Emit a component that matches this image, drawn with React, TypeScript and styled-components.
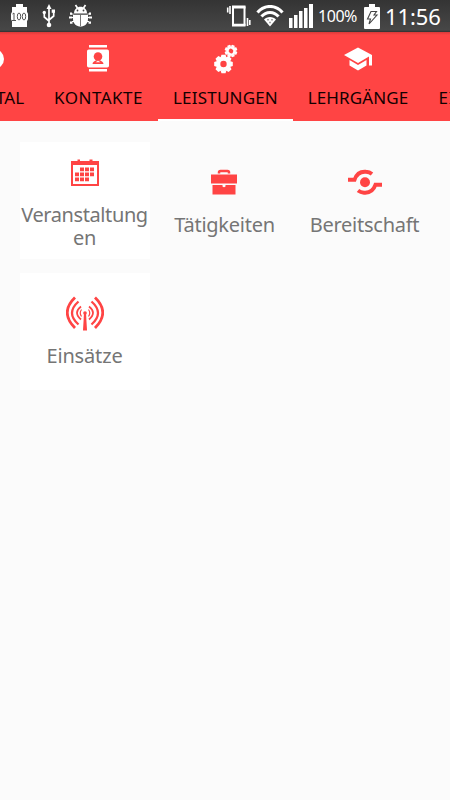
import React from "react";
import styled, { createGlobalStyle } from "styled-components";

const RED = "#ff4444";

const GlobalStyle = createGlobalStyle`
  * { box-sizing: border-box; }
  body { margin: 0; background: #fbfbfb; font-family: "Noto Sans", "Open Sans", sans-serif; }
  svg { display: block; flex: none; }
`;

const Screen = styled.div`
  width: 450px;
  height: 800px;
  overflow: hidden;
  background: #fbfbfb;
`;

const StatusBar = styled.header`
  display: flex;
  align-items: flex-start;
  justify-content: space-between;
  height: 32px;
  padding: 0 9px 0 11px;
  background: linear-gradient(#343434, #474747 94%, #303030);
  color: #fff;
`;

const StatusGroup = styled.div<{ $gap: number }>`
  display: flex;
  align-items: center;
  height: 32px;
  gap: ${(p) => p.$gap}px;
`;

const BatteryPercent = styled.span<{ $width: number }>`
  width: ${(p) => p.$width}px;
  font-size: 16px;
  line-height: 32px;
  letter-spacing: -0.45px;
  white-space: nowrap;
`;

const Clock = styled.time`
  width: 56px;
  font-size: 22px;
  line-height: 32px;
  letter-spacing: -0.1px;
  white-space: nowrap;
`;

const TabBar = styled.nav`
  display: flex;
  height: 89px;
  overflow: hidden;
  background: linear-gradient(#d93a3a, ${RED} 3px);
`;

const Tab = styled.div<{ $width: number; $shift?: number; $active?: boolean }>`
  display: flex;
  flex: none;
  flex-direction: column;
  align-items: center;
  width: ${(p) => p.$width}px;
  height: 89px;
  margin-left: ${(p) => p.$shift ?? 0}px;
  padding-top: 12px;
  border-bottom: 2px solid ${(p) => (p.$active ? "#fff" : "transparent")};
`;

const TabLabel = styled.span<{ $spacing: number }>`
  margin-top: 12px;
  color: #140000;
  font-size: 17px;
  line-height: 24px;
  letter-spacing: ${(p) => p.$spacing}px;
  white-space: nowrap;
`;

const TileGrid = styled.main`
  display: grid;
  grid-template-columns: repeat(3, 130px);
  grid-auto-rows: 117px;
  gap: 14px 10px;
  padding: 21px 20px;
`;

const Tile = styled.div<{ $raised?: boolean; $top: number }>`
  display: flex;
  flex-direction: column;
  align-items: center;
  padding-top: ${(p) => p.$top}px;
  background: ${(p) => (p.$raised ? "#fff" : "transparent")};
`;

const TileLabel = styled.span<{ $spacing: number; $gap?: number }>`
  margin-top: ${(p) => p.$gap ?? 15}px;
  margin-left: -1px;
  color: #757575;
  font-size: 20px;
  line-height: 23px;
  letter-spacing: ${(p) => p.$spacing}px;
  text-align: center;
  white-space: nowrap;
`;

const ChargeIcon = () => (
  <svg width="17" height="24" viewBox="0 0 17 24">
    <path d="M5 0h7v3h4v20H1V3h4z" fill="#fff" />
    <rect x="0" y="8" width="17" height="9" rx="2" fill="#fff" />
    <g fill="none" stroke="#555" strokeWidth="1">
      <path d="M1.500 10l1.500-1v7M1 16.500h4" />
      <ellipse cx="8" cy="12.500" rx="1.700" ry="3.500" />
      <ellipse cx="13" cy="12.500" rx="1.700" ry="3.500" />
    </g>
  </svg>
);

const UsbIcon = () => (
  <svg width="13" height="24" viewBox="0 0 13 24" fill="none" stroke="#fff" strokeWidth="1.700">
    <path d="M7 3v18M2.300 9v4L7 17M11.700 8v4L7 16" />
    <path d="M7 0l2.500 5h-5z" fill="#fff" stroke="none" />
    <circle cx="7" cy="21" r="2.300" fill="#fff" stroke="none" />
    <circle cx="2.300" cy="8.500" r="1.700" fill="#fff" stroke="none" />
    <rect x="9.700" y="5.500" width="3.300" height="3.300" fill="#fff" stroke="none" />
  </svg>
);

const DebugIcon = () => (
  <svg width="23" height="24" viewBox="0 0 23 24">
    <path d="M6.500 1l2 3M16.500 1l-2 3" stroke="#fff" strokeWidth="1.700" />
    <path d="M5 9.500c0-9 13-9 13 0z" fill="#fff" />
    <path d="M4 10.700h15V15c0 10-15 10-15 0z" fill="#fff" />
    <path d="M1 8.500h2v2.200H1zM20 8.500h2v2.200h-2zM0 12.500h3.300v2H0zM19.700 12.500H23v2h-3.300zM1 17.500h2.500v2.200H1zM19.500 17.500H22v2.200h-2.500z" fill="#fff" />
    <path d="M1.500 10h3M18.500 10h3M3 13.500h2M18 13.500h2M3 17.500h3M17 17.500h3" stroke="#fff" strokeWidth="1" />
    <path d="M11.500 11v11" stroke="#777" />
    <circle cx="8.500" cy="6.500" r="0.900" fill="#444" />
    <circle cx="14.500" cy="6.500" r="0.900" fill="#444" />
  </svg>
);

const VibrateIcon = () => (
  <svg width="25" height="24" viewBox="0 0 25 24" fill="none" stroke="#fff">
    <rect x="7" y="2.500" width="11.500" height="19" strokeWidth="2" />
    <path d="M6 3.500h13.500M6 20.800h13.500" strokeWidth="2" />
    <path d="M4 2v8M1.700 3.500v5M21.500 14v8M23.800 16v5" strokeWidth="1.600" />
  </svg>
);

const WifiIcon = () => (
  <svg width="28" height="22" viewBox="0 0 28 22" fill="none" stroke="#fff">
    <path d="M1.500 7.500C8-.6 20-.6 26.500 7.500M5.500 11.500c4.500-5.500 12.500-5.500 17 0" strokeWidth="3" />
    <path d="M8 14.500c2.500-3.500 9.500-3.500 12 0L14 21.500z" fill="#fff" stroke="none" />
    <path d="M11.500 14.800h1M15.500 14.800h1M13.500 17.500h1" stroke="#444" strokeWidth="1.400" />
  </svg>
);

const SignalIcon = () => (
  <svg width="24" height="24" viewBox="0 0 24 24" fill="#fff">
    <path d="M0 14h3.500v10H0zM5 11h3.500v13H5zM10 7h3.500v17H10zM15 4h3.500v20H15zM20 0h4v24h-4z" />
  </svg>
);

const BatteryIcon = () => (
  <svg width="16" height="25" viewBox="0 0 16 25">
    <path d="M5 0h6v3h4q1 0 1 1v20q0 1-1 1H1q-1 0-1-1V4q0-1 1-1h4z" fill="#fff" />
    <path d="M7 7.500h5.500L10 11h3L5 20l1.500-5H3.500z" fill="none" stroke="#444" strokeWidth="1.100" />
  </svg>
);

const CircleIcon = () => (
  <svg width="26" height="30" viewBox="0 0 26 30">
    <circle cx="14" cy="15" r="10" fill="#fff" />
  </svg>
);

const ContactsIcon = () => (
  <svg width="24" height="30" viewBox="0 0 24 30">
    <path d="M2 1h18v2.500H2zM2 25h18v2.500H2z" fill="#fff" />
    <rect x="0" y="5.500" width="22" height="18" rx="1.800" fill="#fff" />
    <circle cx="11" cy="12.500" r="4.300" fill={RED} />
    <path d="M5.500 20c0-2 2-3 3.500-3.800h4c1.500.8 3.500 1.800 3.500 3.800z" fill={RED} />
    <path d="M8.500 18.300l2.500-1.500 2.500 1.500z" fill="#fff" />
  </svg>
);

interface GearProps {
  cx: number;
  cy: number;
  r: number;
  hole: number;
  teeth: number;
  turn?: number;
}

const Gear = ({ cx, cy, r, hole, teeth, turn = 0 }: GearProps) => (
  <g transform={`translate(${cx} ${cy}) rotate(${turn})`}>
    <circle r={(r * 0.77 + hole) / 2} fill="none" stroke="#fff" strokeWidth={r * 0.77 - hole} />
    {Array.from({ length: teeth }, (_, i) => (
      <path
        key={i}
        d={`M${-r * 0.32} ${-r * 0.67}L${-r * 0.22} ${-r}H${r * 0.22}L${r * 0.32} ${-r * 0.67}z`}
        fill="#fff"
        transform={`rotate(${(i * 360) / teeth})`}
      />
    ))}
  </g>
);

const GearsIcon = () => (
  <svg width="24" height="30" viewBox="0 0 24 30">
    <Gear cx={9.500} cy={20} r={9.300} hole={3.200} teeth={8} />
    <Gear cx={17} cy={7} r={6.300} hole={2.300} teeth={8} turn={22.500} />
  </svg>
);

const GraduationIcon = () => (
  <svg width="28" height="30" viewBox="0 0 28 30" fill="#fff">
    <path d="M14 3.500L28 11v10.500h-3v-9L14 19 0 11z" />
    <path d="M5.500 16v5.500L14 26.500l8.500-5V16L14 21z" />
  </svg>
);

const CalendarIcon = () => (
  <svg width="28" height="30" viewBox="0 0 28 30" fill={RED}>
    <path fillRule="evenodd" d="M0 3h28v25H0zM2 7v19h24V7z" />
    <path d="M6.500 1.500h2.500V7H6.500zM18.500 1.500h3V7h-3z" />
    <path d="M9 9.500h4v3.800H9zM14 9.500h4v3.800h-4zM19 9.500h4v3.800h-4zM4 14.500h4v3.800H4zM9 14.500h4v3.800H9zM14 14.500h4v3.800h-4zM19 14.500h4v3.800h-4zM4 19.500h4v3.800H4zM9 19.500h4v3.800H9zM14 19.500h4v3.800h-4z" />
  </svg>
);

const BriefcaseIcon = () => (
  <svg width="28" height="30" viewBox="0 0 28 30">
    <path d="M8 5.500V4.500Q8 3 9.500 3h7Q18 3 18 4.500V5.500" fill="none" stroke={RED} strokeWidth="2.500" />
    <path d="M0 6.500h26v9H0zM1.500 17h10v1.500q1.500 1.500 3 0V17h10v9.500h-23z" fill={RED} />
  </svg>
);

const StandbyIcon = () => (
  <svg width="36" height="30" viewBox="0 0 36 30">
    <circle cx="18" cy="14.300" r="5" fill={RED} />
    <g fill="none" stroke={RED} strokeWidth="3.900">
      <path d="M1 11.800h6.500C9.500 6 13.500 3.300 19 3.800q3.500.2 6 2.200" />
      <path d="M35 16.700h-6.500C26.500 22.500 22.500 25.200 17 24.700q-3.500-.2-6-2.200" />
    </g>
  </svg>
);

const AntennaIcon = () => (
  <svg width="38" height="36" viewBox="0 0 38 36" fill="none" stroke={RED}>
    <circle cx="19" cy="17" r="1.800" fill={RED} stroke="none" />
    <path d="M18 17h2l1 17.500h-4z" fill={RED} stroke="none" />
    <path d="M15.500 13.500q-2.500 3.500 0 7M22.500 13.500q2.500 3.500 0 7" strokeWidth="1.200" />
    <path d="M15 10.500q-8 6 0 13M23 10.500q8 6 0 13" strokeWidth="1.800" />
    <path d="M12.500 5.500q-13 11.500 0 23M25.500 5.500q13 11.500 0 23" strokeWidth="2.300" />
    <path d="M9 1.500q-15.500 15 0 30.500M29 1.500q15.500 15 0 30.500" strokeWidth="2.800" />
  </svg>
);

export default function App() {
  return (
    <Screen>
      <GlobalStyle />
      <StatusBar>
        <StatusGroup $gap={14}>
          <ChargeIcon />
          <UsbIcon />
          <DebugIcon />
        </StatusGroup>
        <StatusGroup $gap={5}>
          <VibrateIcon />
          <WifiIcon />
          <SignalIcon />
          <BatteryPercent $width={41}>100%</BatteryPercent>
          <BatteryIcon />
          <Clock>11:56</Clock>
        </StatusGroup>
      </StatusBar>
      <TabBar>
        <Tab $width={92} $shift={-53}>
          <CircleIcon />
          <TabLabel $spacing={0}>PORTAL</TabLabel>
        </Tab>
        <Tab $width={119}>
          <ContactsIcon />
          <TabLabel $spacing={0.5}>KONTAKTE</TabLabel>
        </Tab>
        <Tab $width={135} $active>
          <GearsIcon />
          <TabLabel $spacing={0.2}>LEISTUNGEN</TabLabel>
        </Tab>
        <Tab $width={130}>
          <GraduationIcon />
          <TabLabel $spacing={0.1}>LEHRGÄNGE</TabLabel>
        </Tab>
        <Tab $width={48}>
          <svg width="22" height="30" />
          <TabLabel $spacing={1}>EI</TabLabel>
        </Tab>
      </TabBar>
      <TileGrid>
        <Tile $raised $top={16}>
          <CalendarIcon />
          <TileLabel $spacing={-0.4}>
            Veranstaltung
            <br />
            en
          </TileLabel>
        </Tile>
        <Tile $top={26}>
          <BriefcaseIcon />
          <TileLabel $spacing={-0.25}>Tätigkeiten</TileLabel>
        </Tile>
        <Tile $top={26}>
          <StandbyIcon />
          <TileLabel $spacing={-0.25}>Bereitschaft</TileLabel>
        </Tile>
        <Tile $raised $top={23}>
          <AntennaIcon />
          <TileLabel $spacing={-0.15} $gap={12}>Einsätze</TileLabel>
        </Tile>
      </TileGrid>
    </Screen>
  );
}
